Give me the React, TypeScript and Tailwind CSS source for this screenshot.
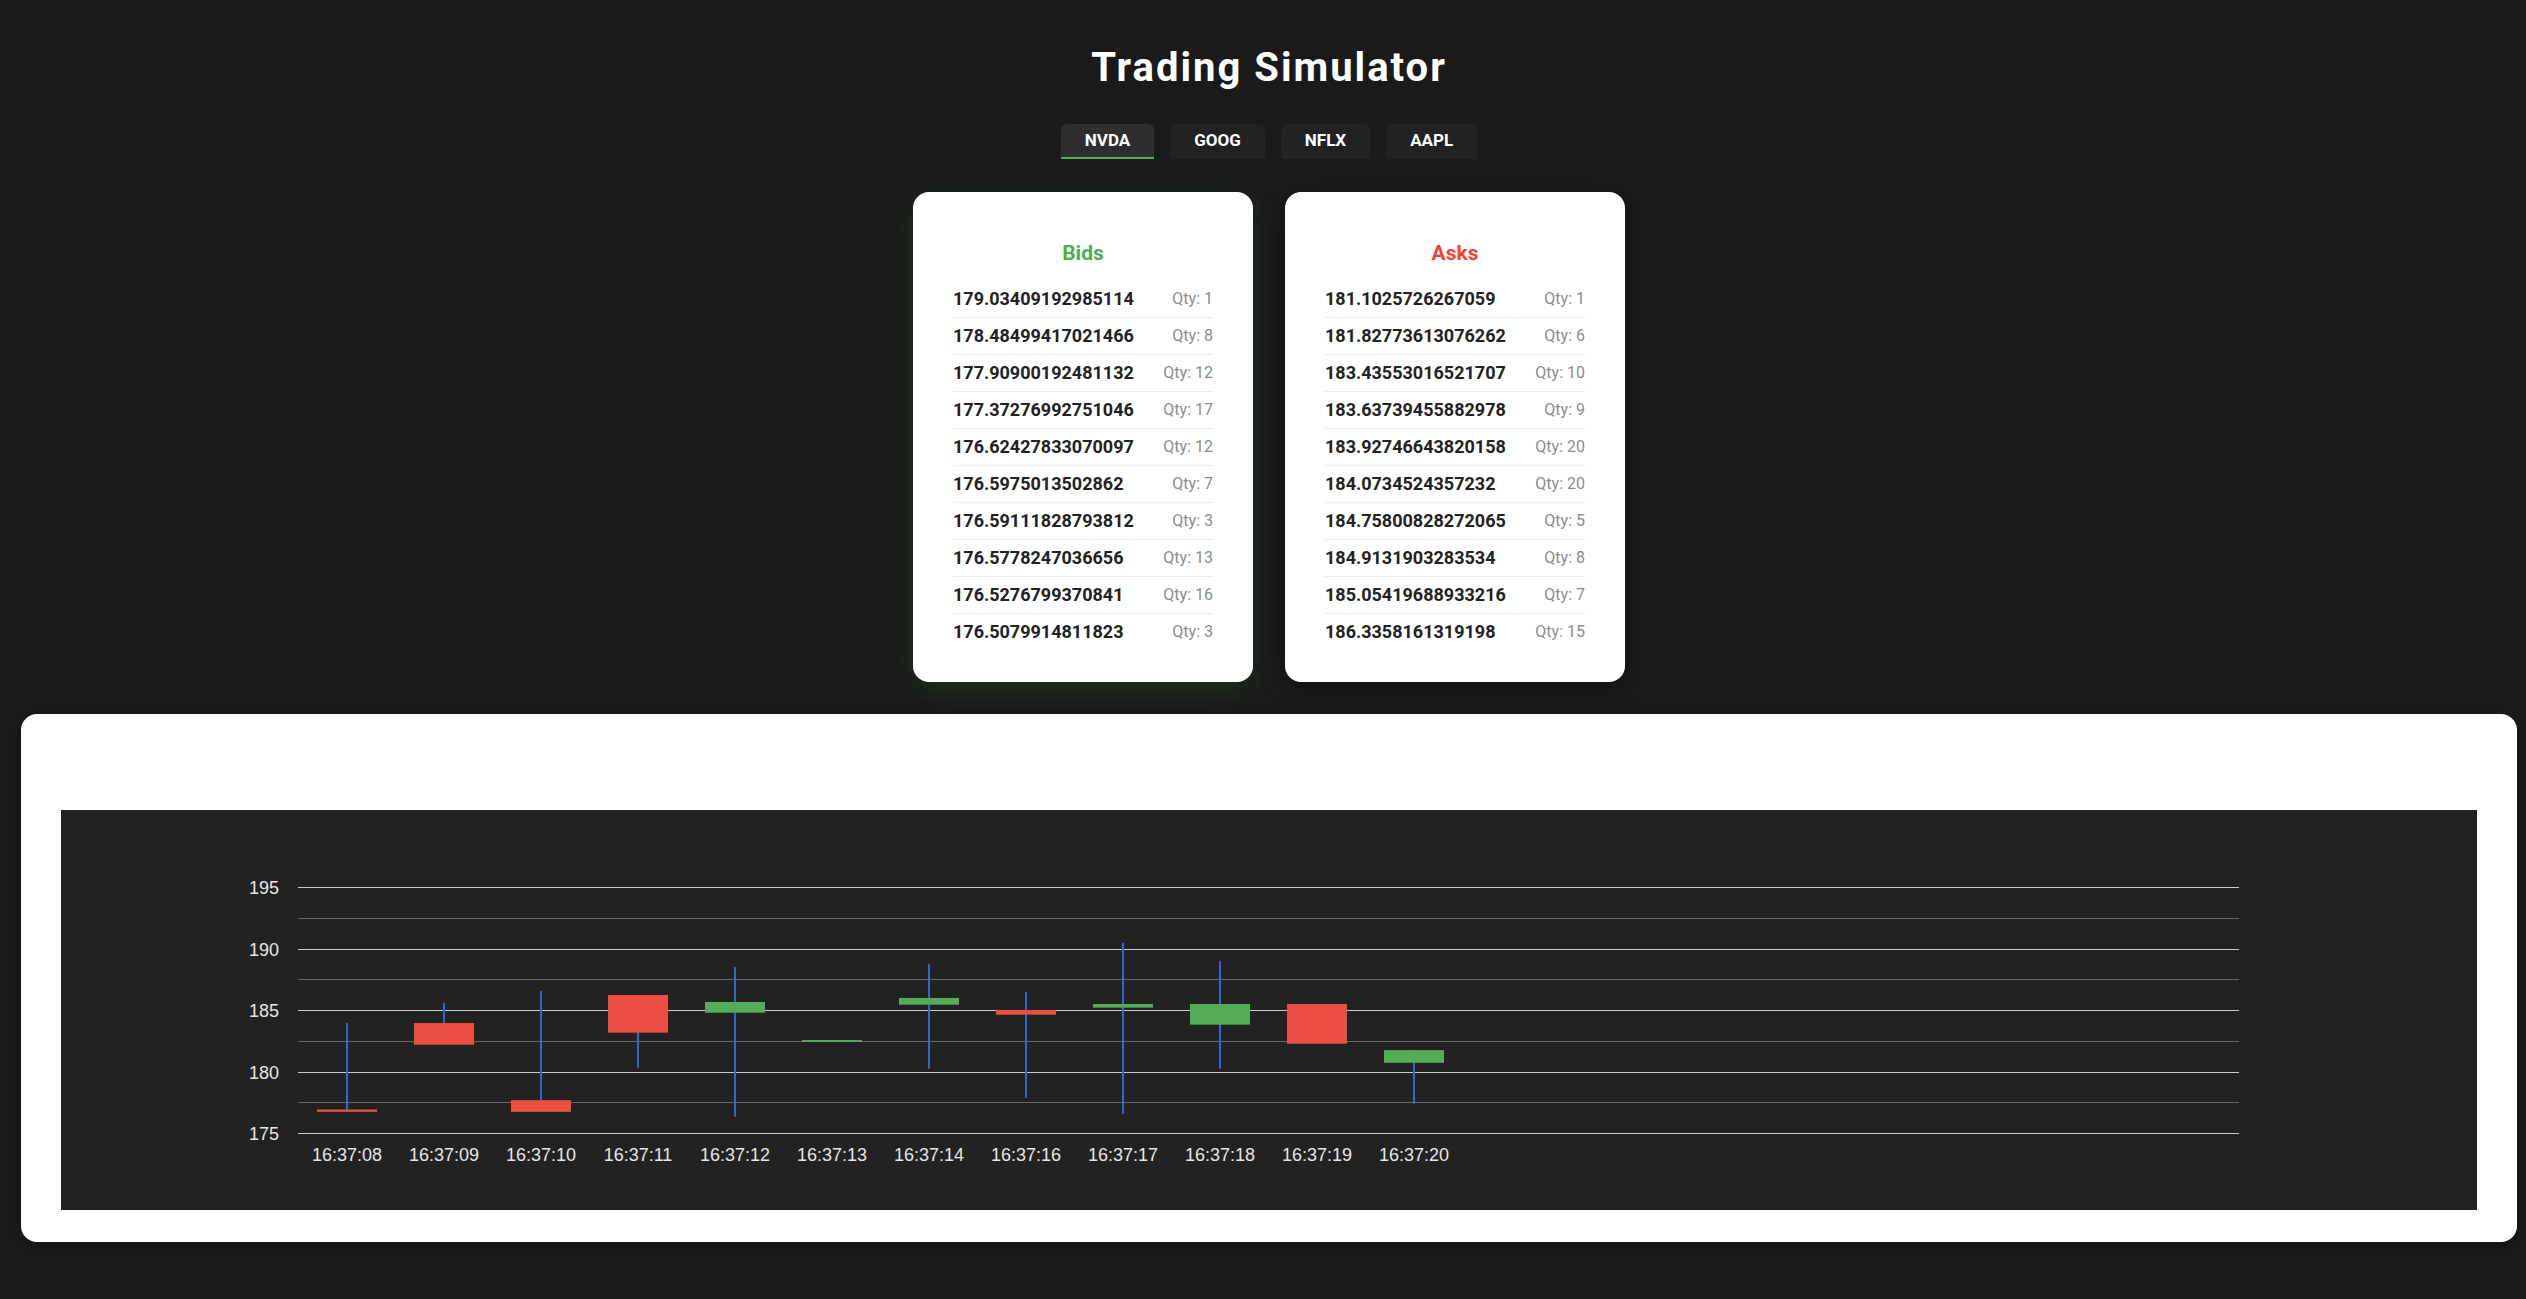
import React, { useState } from 'react';

type Level = { price: string; qty: number };
type Candle = { time: string; low: number; open: number; close: number; high: number };

const bids: Level[] = [
  { price: '179.03409192985114', qty: 1 },
  { price: '178.48499417021466', qty: 8 },
  { price: '177.90900192481132', qty: 12 },
  { price: '177.37276992751046', qty: 17 },
  { price: '176.62427833070097', qty: 12 },
  { price: '176.5975013502862', qty: 7 },
  { price: '176.59111828793812', qty: 3 },
  { price: '176.5778247036656', qty: 13 },
  { price: '176.5276799370841', qty: 16 },
  { price: '176.5079914811823', qty: 3 },
];

const asks: Level[] = [
  { price: '181.1025726267059', qty: 1 },
  { price: '181.82773613076262', qty: 6 },
  { price: '183.43553016521707', qty: 10 },
  { price: '183.63739455882978', qty: 9 },
  { price: '183.92746643820158', qty: 20 },
  { price: '184.0734524357232', qty: 20 },
  { price: '184.75800828272065', qty: 5 },
  { price: '184.9131903283534', qty: 8 },
  { price: '185.05419688933216', qty: 7 },
  { price: '186.3358161319198', qty: 15 },
];

const candles: Candle[] = [
  { time: '16:37:08', low: 176.76, open: 176.95, close: 176.76, high: 183.98 },
  { time: '16:37:09', low: 182.22, open: 183.98, close: 182.22, high: 185.6 },
  { time: '16:37:10', low: 176.76, open: 177.71, close: 176.76, high: 186.59 },
  { time: '16:37:11', low: 180.35, open: 186.26, close: 183.2, high: 186.26 },
  { time: '16:37:12', low: 176.36, open: 184.82, close: 185.69, high: 188.54 },
  { time: '16:37:13', low: 182.46, open: 182.46, close: 182.6, high: 182.6 },
  { time: '16:37:14', low: 180.26, open: 185.47, close: 186.02, high: 188.79 },
  { time: '16:37:16', low: 177.9, open: 185.04, close: 184.66, high: 186.5 },
  { time: '16:37:17', low: 176.6, open: 185.23, close: 185.53, high: 190.5 },
  { time: '16:37:18', low: 180.26, open: 183.85, close: 185.53, high: 189.03 },
  { time: '16:37:19', low: 182.3, open: 185.53, close: 182.3, high: 185.53 },
  { time: '16:37:20', low: 177.42, open: 180.75, close: 181.78, high: 181.78 },
];

const tickers = ['NVDA', 'GOOG', 'NFLX', 'AAPL'];

const OrderBook: React.FC<{ title: string; tone: 'bid' | 'ask'; rows: Level[] }> = ({ title, tone, rows }) => (
  <div
    className={
      tone === 'bid'
        ? 'w-[340px] bg-white rounded-2xl px-10 pt-[47px] pb-8 shadow-[0_6px_30px_rgba(76,175,80,0.14)]'
        : 'w-[340px] bg-white rounded-2xl px-10 pt-[47px] pb-8 shadow-[0_6px_24px_rgba(0,0,0,0.35)]'
    }
  >
    <h3
      className={
        tone === 'bid'
          ? 'text-center text-[21px] leading-[28px] font-bold text-[#4caf50]'
          : 'text-center text-[21px] leading-[28px] font-bold text-[#f44336]'
      }
    >
      {title}
    </h3>
    <ul className="mt-[14px]">
      {rows.map((r) => (
        <li
          key={r.price}
          className="flex justify-between items-center py-[6px] border-b border-[#ececec] last:border-0"
        >
          <span className="text-[18px] leading-[24px] font-bold text-[#222]">{r.price}</span>
          <span className="text-[16px] leading-[24px] text-[#8c8c8c]">Qty: {r.qty}</span>
        </li>
      ))}
    </ul>
  </div>
);

const CandleChart: React.FC<{ data: Candle[] }> = ({ data }) => {
  const top = 77.5;
  const bot = 323.5;
  const unit = (bot - top) / 20;
  const yOf = (v: number) => bot - (v - 175) * unit;
  const x0 = 237;
  const x1 = 2178;
  const slot = (x1 - x0) / 20;
  const font = 'Liberation Sans, Arial, sans-serif';

  const grid = Array.from({ length: 9 }, (_, k) => 175 + k * 2.5);

  return (
    <svg width="2416" height="400" className="block">
      {grid.map((v, k) => {
        const y = Math.round(yOf(v) - 0.5) + 0.5;
        const major = k % 2 === 0;
        return (
          <g key={v}>
            <line x1={x0} x2={x1} y1={y} y2={y} stroke={major ? '#cccccc' : '#666666'} strokeWidth="1" />
            {major && (
              <text x="218" y={y + 6.5} textAnchor="end" fontSize="18" fontFamily={font} fill="#e6e6e6">
                {v}
              </text>
            )}
          </g>
        );
      })}
      {data.map((c, i) => {
        const cx = Math.round(x0 + slot * (i + 0.5));
        const up = c.close >= c.open;
        const bTop = yOf(Math.max(c.open, c.close));
        const bBot = yOf(Math.min(c.open, c.close));
        return (
          <g key={c.time}>
            <line x1={cx} x2={cx} y1={yOf(c.high)} y2={yOf(c.low)} stroke="#3366cc" strokeWidth="2" />
            <rect
              x={cx - 30}
              y={bTop}
              width="60"
              height={Math.max(bBot - bTop, 2)}
              fill={up ? '#53ad57' : '#ea4f41'}
            />
            <text x={cx} y="351" textAnchor="middle" fontSize="18" fontFamily={font} fill="#e6e6e6">
              {c.time}
            </text>
          </g>
        );
      })}
    </svg>
  );
};

export default function App() {
  const [active, setActive] = useState('NVDA');

  return (
    <div className="min-h-screen bg-[#1a1a1a] font-[Roboto,sans-serif] pl-[12px] pt-[44px] pb-[56px]">
      <h1 className="text-center text-white text-[40px] leading-[48px] font-bold tracking-wider">
        Trading Simulator
      </h1>

      <div className="mt-[32px] flex justify-center gap-4">
        {tickers.map((t) => (
          <button
            key={t}
            onClick={() => setActive(t)}
            className={
              t === active
                ? 'h-[35px] px-6 rounded-t-md border-b-2 border-[#4caf50] bg-[#2e2e2e] text-white text-[17px] font-bold'
                : 'h-[35px] px-6 rounded-t-md border-b-2 border-transparent bg-[#222222] text-white text-[17px] font-bold'
            }
          >
            {t}
          </button>
        ))}
      </div>

      <div className="mt-[33px] flex justify-center gap-8">
        <OrderBook title="Bids" tone="bid" rows={bids} />
        <OrderBook title="Asks" tone="ask" rows={asks} />
      </div>

      <div className="mt-[32px] mx-[9px] bg-white rounded-2xl px-10 pt-[96px] pb-8 shadow-[0_4px_16px_rgba(0,0,0,0.3)]">
        <div className="bg-[#222222] h-[400px]">
          <CandleChart data={candles} />
        </div>
      </div>
    </div>
  );
}
